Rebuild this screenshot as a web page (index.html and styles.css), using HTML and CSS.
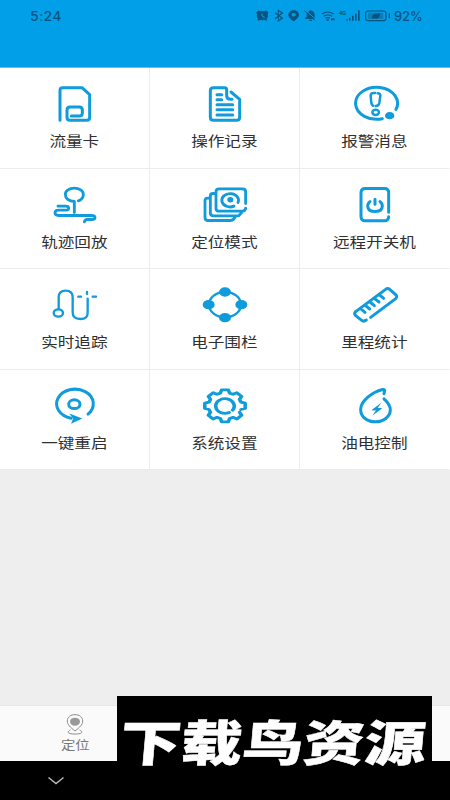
FILE: index.html
```
<!DOCTYPE html>
<html lang="zh-CN">
<head>
<meta charset="utf-8">
<title>设备功能</title>
<link rel="stylesheet" href="styles.css">
</head>
<body>
<div class="screen">
  <header class="status">
    <span class="time">5:24</span>
    <div class="status-right">
      <svg class="status-icons" viewBox="315 27 180 42">
        <g class="dark">
          <ellipse cx="337" cy="47" rx="17" ry="14"/>
          <path d="M318 37l9-6 4 4-9 7zM356 37l-9-6-4 4 9 7zM321 59l6-3 4 3-6 3zM353 59l-6-3-4 3 6 3z"/>
          <path class="cut" d="M336 40v8l8 4"/>
          <path class="thin" d="M375 38l22 17-12 8V31l12 8-22 17"/>
          <path fill-rule="evenodd" d="M431 31c-10 0-16 6-16 13 0 10 16 20 16 20s16-10 16-20c0-7-6-13-16-13zm0 8a6 5 0 1 1 0 11 6 5 0 0 1 0-11z"/>
          <path d="M465 54l5-4v-6c0-7 4-10 8-11 2-3 6-3 8 0 5 2 8 6 8 12v8l3 4h-32zM477 59h10c-1 5-9 5-10 0z"/>
          <path class="cut" d="M467 31l30 27"/>
          <path class="slash" d="M463 32l32 29"/>
        </g>
      </svg>
      <svg class="signal-icons" viewBox="513 27 210 42">
        <g class="dark">
          <path class="thin" d="M516 42q17-12 35 0M521 49q12-8 25 0M527 55q6-4 13 0"/>
          <ellipse cx="533" cy="60" rx="4" ry="3"/><path d="M543 55h11v6h-11z"/>
          <path d="M589 57h4v5h-4zM597 53h5v9h-5zM606 47h5v15h-5zM615 41h5v21h-5zM624 31h5v31h-5z"/>
          <rect class="thin" x="647" y="33" width="61" height="29" rx="7"/>
          <path d="M716 40h4v15h-4z"/>
          <path class="charge" d="M654 38h46v19h-46z"/>
          <path d="M667 57c-3-12 5-18 24-18 0 14-8 20-18 16z"/>
          <text x="566" y="45">4G</text>
        </g>
      </svg>
      <span class="battery">92%</span>
    </div>
  </header>

  <main class="grid">
    <div class="cell">
      <svg class="icon" viewBox="150 48 150 120"><path d="M180 157V67q0-8 8-8h58l23 21v68q0 9-9 9h-50q-9 0-9-9v-22q0-9 9-9h28q9 0 9 9v10q0 8-9 8h-24"/></svg>
      <span class="label">流量卡</span>
    </div>
    <div class="cell">
      <svg class="icon" viewBox="150 48 150 120"><path d="M243 72l26 22v54q0 9-9 9h-70q-9 0-9-9V68q0-9 9-9h34q6 0 6 6v17q0 12 12 12h4M201 80h14M201 95h14M201 110h47M201 125h47M201 141h47"/></svg>
      <span class="label">操作记录</span>
    </div>
    <div class="cell">
      <svg class="icon" viewBox="150 48 150 120"><path d="M247 152A63 48 0 1 1 288 124"/><path class="mark" d="M219 113q-4-3-5-8l-2-22q0-8 9-8h4M233 76q8 0 8 7l-3 22q-2 9-11 9"/><ellipse class="mark" cx="227" cy="133" rx="10" ry="8"/><ellipse class="solid" cx="269" cy="143" rx="14" ry="11"/></svg>
      <span class="label">报警消息</span>
    </div>

    <div class="cell">
      <svg class="icon medium" viewBox="150 49.5 150 120"><path d="M223 132V99C206 99 196 89 196 78C196 67 208 59 223 59S250 67 250 78C250 87 244 94 235 97M174 113h23q9 0 9 6t-10 6h-20q-11 0-11 8t11 8h97q12 0 12 6t-10 6h-12q-8 0-10 7"/></svg>
      <span class="label">轨迹回放</span>
    </div>
    <div class="cell">
      <svg class="icon medium" viewBox="150 49.5 150 120"><path d="M287 105V70q0-9-9-9h-71q-9 0-9 9v49q0 9 9 9h69q10 0 11-9M198 75h-9q-8 0-8 8v50q0 9 9 9h76l10-11M180 89h-7q-8 0-8 8v50q0 9 9 9h68q9 0 14-12M252 113A25 20 0 1 1 264 102"/><ellipse cx="241" cy="94" rx="5" ry="4"/></svg>
      <span class="label">定位模式</span>
    </div>
    <div class="cell">
      <svg class="icon" viewBox="150 49.5 150 120"><path d="M266 131V73q0-13-13-13h-57q-13 0-13 13v71q0 13 13 13h57q12 0 13-12M210 99C198 110 201 129 225 129S252 110 240 99M225 92v15"/></svg>
      <span class="label">远程开关机</span>
    </div>

    <div class="cell">
      <svg class="icon thin-line" viewBox="150 51 150 120"><ellipse cx="175" cy="135" rx="14" ry="11"/><path d="M176 123V88q0-20 21-20t21 20v45q0 20 23 20t22-20V92M235 86h8M261 72v6M278 86h10"/></svg>
      <span class="label">实时追踪</span>
    </div>
    <div class="cell">
      <svg class="icon thin-line" viewBox="150 51 150 120"><ellipse cx="225" cy="110" rx="48" ry="38"/><g class="solid"><ellipse cx="176" cy="110" rx="18" ry="14"/><ellipse cx="274" cy="110" rx="18" ry="14"/><ellipse cx="225" cy="72" rx="18" ry="14"/><ellipse cx="225" cy="149" rx="18" ry="14"/></g></svg>
      <span class="label">电子围栏</span>
    </div>
    <div class="cell">
      <svg class="icon" viewBox="150 51 150 120"><path d="M212 148l75-56q6-6 0-12l-18-16q-6-5-12 0l-90 67q-6 6 0 12l18 14q6 5 14-1M182 122l13 11M196 112l13 11M210 102l13 11M224 92l13 10M239 81l12 10"/></svg>
      <span class="label">里程统计</span>
    </div>

    <div class="cell">
      <svg class="icon" viewBox="150 49.5 150 120"><path d="M264 134A55 44 0 1 0 213 146"/><ellipse cx="223" cy="104" rx="17" ry="13"/><path class="solid" d="M208 132l39 15-34 16 6-15z"/></svg>
      <span class="label">一键重启</span>
    </div>
    <div class="cell">
      <svg class="icon medium" viewBox="150 49.5 150 120"><g transform="translate(225 109) scale(1.26 1)"><path d="M34.6 19.1L39.6 28.3L28.3 39.6L19.1 34.6L11 38L8 48H-8L-11 38L-19.1 34.6L-28.3 39.6L-39.6 28.3L-34.6 19.1L-38 11L-48 8V-8L-38-11L-34.6-19.1L-39.6-28.3L-28.3-39.6L-19.1-34.6L-11-38L-8-48H8L11-38L19.1-34.6L28.3-39.6L39.6-28.3L34.6-19.1L38-11L48-8V8L38 11M10 20A22 22 0 1 1 18 13"/></g></svg>
      <span class="label">系统设置</span>
    </div>
    <div class="cell">
      <svg class="icon" viewBox="150 49.5 150 120"><path d="M252 73l2-11q-1-3-6-2C215 68 182 95 182 120C182 143 202 157 226 157S271 142 271 121C271 108 263 98 252 88"/><path class="bolt" d="M245 99l-31 23 14 1-11 16 30-23-14-1z"/></svg>
      <span class="label">油电控制</span>
    </div>
  </main>

  <nav class="tabs">
    <div class="tab">
      <svg class="pin" viewBox="198 68 54 66"><path d="M225 122C210 110 202 103 202 92C202 80 212 73 225 73S248 80 248 92C248 103 240 110 225 122zM211 119c-13 7-6 12 14 12s27-5 14-12"/><ellipse cx="225" cy="94" rx="15" ry="12"/></svg>
      <span class="tab-label">定位</span>
    </div>
  </nav>
  <footer class="system">
    <svg class="chevron" viewBox="0 0 18 9"><path d="M1.5 1.5L9 7.500l7.500-6"/></svg>
  </footer>
  <div class="watermark"><span>下载鸟资源</span></div>
</div>
</body>
</html>
```
FILE: styles.css
```
* { box-sizing: border-box; }
body {
  margin: 0;
  font-family: "Noto Sans", "Noto Sans CJK SC", sans-serif;
}
.screen {
  position: relative;
  width: 450px;
  height: 800px;
  display: flex;
  flex-direction: column;
  background: #eee;
  overflow: hidden;
}
.status {
  height: 68px;
  flex: none;
  display: flex;
  justify-content: space-between;
  align-items: flex-start;
  padding: 9px 27px 0 30px;
  background: #029fe9;
  border-bottom: 1px solid #5dc0f0;
  color: #075480;
  line-height: 14px;
}
.status svg { display: block; }
.time, .battery {
  display: block;
  padding-top: 1px;
  font-family: Inter, sans-serif;
  font-size: 12.500px;
  font-weight: 500;
}
.time {
  transform: scaleX(1.12);
  transform-origin: left;
  letter-spacing: 0.3px;
}
.status-right { display: flex; }
.status-icons { width: 60px; height: 14px; margin-right: 6px; }
.signal-icons { width: 70px; height: 14px; margin-right: 3px; }
.battery {
  width: 29px;
  transform: scaleX(1.03);
  transform-origin: left;
}
.dark { fill: #075480; }
.dark .thin { fill: none; stroke: #075480; stroke-width: 3.500; }
.dark .cut { fill: none; stroke: #029fe9; stroke-width: 3; }
.slash { stroke: #075480; stroke-width: 3; }
.dark .charge { fill: #0780ba; }
.dark text { font: bold 18px Roboto, sans-serif; }
.grid {
  height: 402px;
  flex: none;
  display: grid;
  grid-template-columns: repeat(3, 1fr);
  grid-template-rows: repeat(4, 1fr);
}
.cell {
  display: flex;
  flex-direction: column;
  align-items: center;
  padding-top: 16px;
  background: #fff;
  border-right: 1px solid #ececec;
  border-bottom: 1px solid #ececec;
}
.cell:nth-child(3n) { border-right-color: #fff; }
.icon {
  width: 50px;
  height: 40px;
  flex: none;
  fill: none;
  stroke: #0f9bdc;
  stroke-width: 9;
  stroke-linecap: round;
  stroke-linejoin: round;
}
.medium { stroke-width: 8.500; }
.thin-line { stroke-width: 7; }
.mark { stroke-width: 7.500; }
.solid { fill: #0f9bdc; stroke: none; }
.bolt { fill: #0f9bdc; stroke: none; }
.label {
  margin-top: 7px;
  font-size: 14.200px;
  line-height: 20px;
  color: #303030;
  white-space: nowrap;
  transform: scaleX(1.17);
}
.tabs {
  height: 56px;
  flex: none;
  margin-top: auto;
  display: flex;
  background: #fafafa;
  border-top: 1px solid #e6e6e6;
}
.tab {
  width: 150px;
  display: flex;
  flex-direction: column;
  align-items: center;
  padding-top: 7px;
}
.pin { width: 18px; height: 22px; fill: none; stroke: #8b8b8b; stroke-width: 3; }
.pin ellipse { fill: #999; stroke: none; }
.tab-label {
  margin-top: 2px;
  font-size: 12.300px;
  line-height: 18px;
  color: #777;
  transform: scaleX(1.17);
}
.system {
  height: 39px;
  flex: none;
  padding: 15px 0 0 47px;
  background: #000;
}
.chevron { display: block; width: 18px; height: 9px; fill: none; stroke: #bbb; stroke-width: 1.500; }
.watermark {
  position: absolute;
  left: 117px;
  top: 696px;
  width: 315px;
  height: 104px;
  display: flex;
  justify-content: center;
  padding-top: 9px;
  background: #000;
}
.watermark span {
  color: #fff;
  font-family: "Noto Sans CJK SC", sans-serif;
  font-weight: 900;
  font-size: 48.500px;
  line-height: 70px;
  white-space: nowrap;
  -webkit-text-stroke: 0.500px #fff;
  transform: translateX(-2px) scaleX(1.26) skewX(-4deg);
}
```
